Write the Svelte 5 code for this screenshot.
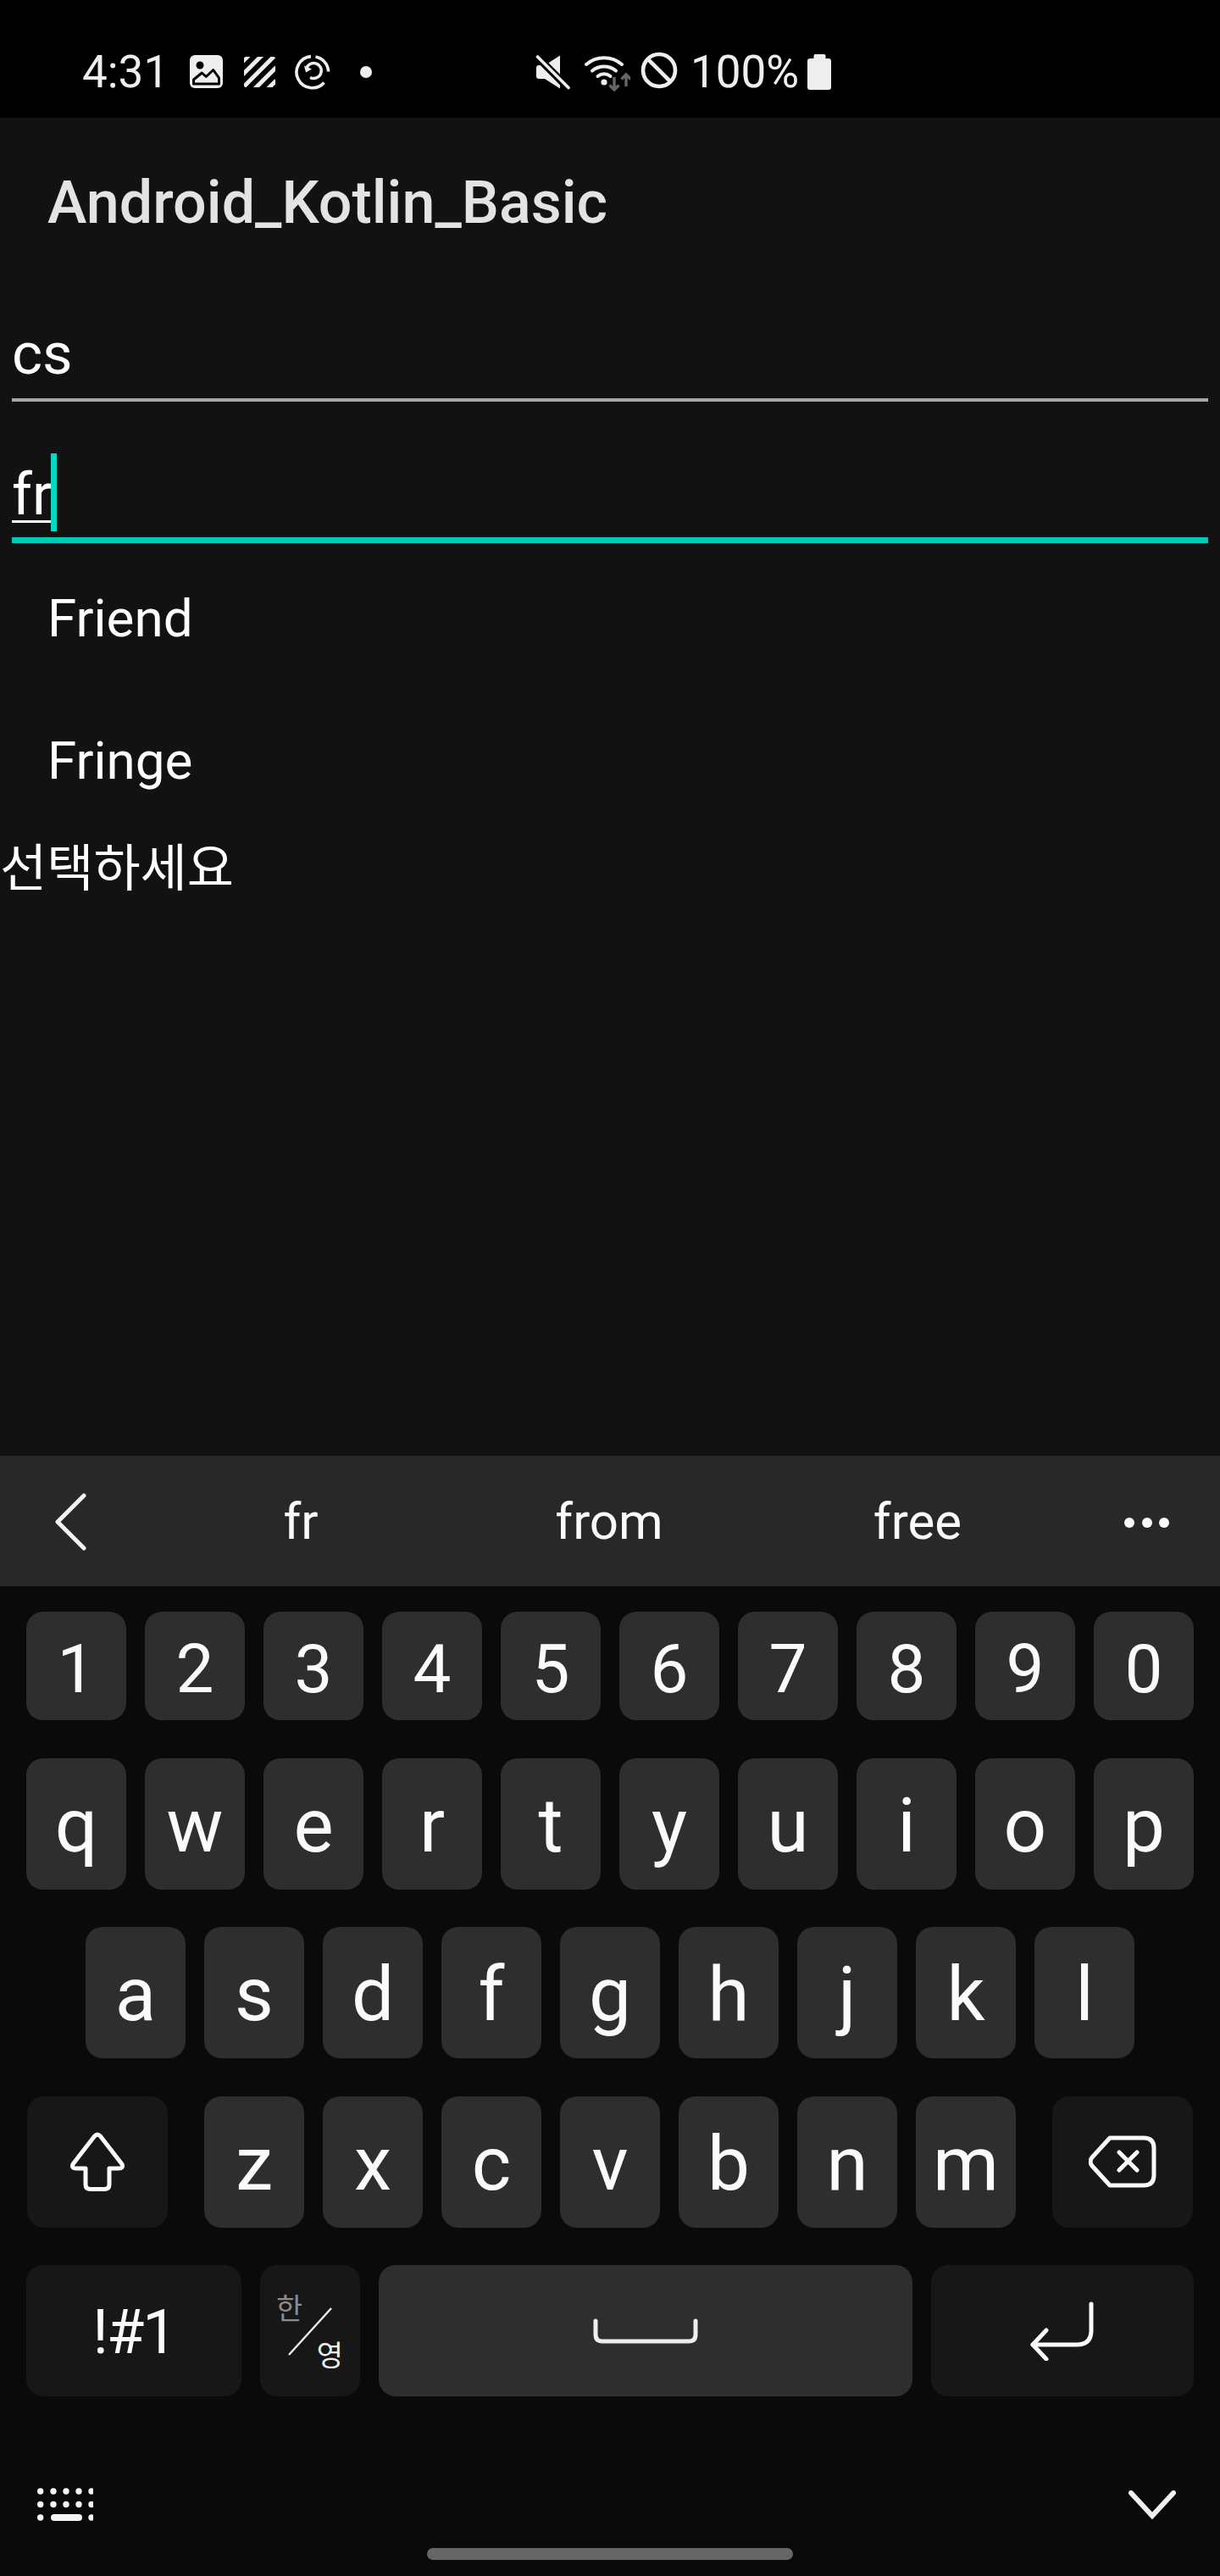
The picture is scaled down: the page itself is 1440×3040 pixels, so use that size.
<script lang="ts">
  const suggestions = ['fr', 'from', 'free'];
  const digits = '1234567890'.split('');
  const topRow = 'qwertyuiop'.split('');
  const midRow = 'asdfghjkl'.split('');
  const lowRow = 'zxcvbnm'.split('');
</script>

<div class="phone">
  <header class="status">
    <span class="clock">4:31</span>
    <svg class="ic-gallery" width="39" height="39" viewBox="0 0 39 39">
      <rect width="39" height="39" rx="6" fill="#eee" />
      <circle cx="12" cy="12" r="4.5" fill="#000" />
      <path d="M4.5 29 L14.3 21 L19.3 25.5 L27.7 17.5 L34.5 27 V34 H4.5 Z" fill="none" stroke="#000" stroke-width="3" stroke-linejoin="round" />
    </svg>
    <svg class="ic-stripes" width="37" height="36" viewBox="0 0 37 36">
      <defs><clipPath id="stripe-clip"><rect width="37" height="36" rx="2" /></clipPath></defs>
      <g clip-path="url(#stripe-clip)" stroke="#eee" stroke-width="5">
        <path d="M-2 6 L6 -2" />
        <path d="M-2 21.5 L21.5 -2" />
        <path d="M-2 37 L37 -2" />
        <path d="M12.5 38 L38 12.5" />
        <path d="M28 38 L38 28" />
      </g>
    </svg>
    <svg class="ic-sync" width="42" height="42" viewBox="0 0 42 42" fill="none" stroke="#eee" stroke-width="3.6">
      <path d="M19 2.6 A18.6 18.6 0 1 0 34.5 33.5" />
      <path d="M24.5 2.9 A18.6 18.6 0 0 1 39.6 20.5" />
      <path d="M13.4 18 A9 9 0 1 1 18 27.4" stroke-width="3.4" />
      <path d="M11 13.5 L13 21.5 L20 17.5 Z" fill="#eee" stroke="none" />
    </svg>
    <span class="dot"></span>
    <svg class="ic-mute" width="42" height="42" viewBox="0 0 42 42">
      <path d="M2 16 Q2 13 5 13 H12 L30 1.5 V40.5 L12 29 H5 Q2 29 2 26 Z" fill="#eee" />
      <path d="M3 3 L40 40" stroke="#000" stroke-width="9" />
      <path d="M3.5 3 L40 39.5" stroke="#eee" stroke-width="3.6" stroke-linecap="round" />
    </svg>
    <svg class="ic-wifi" width="54" height="44" viewBox="0 0 54 44" fill="none">
      <g stroke="#eee" stroke-width="4" stroke-linecap="round">
        <path d="M2 12 A32 32 0 0 1 44 12" />
        <path d="M9 19.5 A22 22 0 0 1 37 19.5" />
        <path d="M15.5 26 A12 12 0 0 1 30.5 26" />
      </g>
      <circle cx="23" cy="33" r="3.6" fill="#eee" />
      <g stroke="#666" stroke-width="3.4">
        <path d="M35 27 V42 M29.5 36.5 L35 42 L40.5 36.5" />
        <path d="M49 38 V24 M43.5 29.5 L49 24 L54.5 29.5" />
      </g>
    </svg>
    <svg class="ic-block" width="44" height="44" viewBox="0 0 44 44" fill="none" stroke="#eee" stroke-width="4.6">
      <circle cx="22" cy="22" r="19" />
      <path d="M8.6 8.6 L35.4 35.4" />
    </svg>
    <span class="battery-pct">100%</span>
    <svg class="ic-battery" width="28" height="42" viewBox="0 0 28 42">
      <path d="M9 0 H20 Q21.5 0 21.5 2 V5 H25 Q28 5 28 8 V39 Q28 42 25 42 H3 Q0 42 0 39 V8 Q0 5 3 5 H7.5 V2 Q7.5 0 9 0 Z" fill="#eee" />
    </svg>
  </header>

  <main class="app">
    <h1 class="app-title">Android_Kotlin_Basic</h1>

    <div class="field">
      <span class="field-text">cs</span>
    </div>
    <div class="field focused">
      <span class="field-text"><span class="composing">fr</span><span class="cursor"></span></span>
    </div>

    <ul class="options">
      <li>Friend</li>
      <li>Fringe</li>
    </ul>
    <p class="hint">선택하세요</p>
  </main>

  <section class="keyboard">
    <div class="suggest">
      <svg class="sg-back" width="44" height="70" viewBox="0 0 44 70" fill="none" stroke="#f5f5f5" stroke-width="5" stroke-linecap="round" stroke-linejoin="round">
        <path d="M35 4 L4 35 L35 66" />
      </svg>
      {#each suggestions as word}
        <span class="sg-word">{word}</span>
      {/each}
      <span class="sg-more"><i></i><i></i><i></i></span>
    </div>

    <div class="rows">
      <div class="row digits">
        {#each digits as d}
          <div class="key">{d}</div>
        {/each}
      </div>
      <div class="row tall">
        {#each topRow as k}
          <div class="key letter">{k}</div>
        {/each}
      </div>
      <div class="row tall">
        {#each midRow as k}
          <div class="key letter">{k}</div>
        {/each}
      </div>
      <div class="row tall">
        <div class="key fn shift">
          <svg width="66" height="70" viewBox="0 0 66 70" fill="none" stroke="#fafafa" stroke-width="5" stroke-linejoin="round">
            <path d="M29.5 5 Q33 1.5 36.5 5 L62 38 Q64 43 58 43 H47 V62 Q47 67.5 41 67.5 H25 Q19 67.5 19 62 V43 H8 Q2 43 4 38 Z" />
          </svg>
        </div>
        {#each lowRow as k}
          <div class="key letter">{k}</div>
        {/each}
        <div class="key fn del">
          <svg width="80" height="62" viewBox="0 0 80 62" fill="none" stroke="#fafafa" stroke-width="5" stroke-linecap="round" stroke-linejoin="round">
            <path d="M25 3 H65 Q77 3 77 15 V47 Q77 59 65 59 H25 L4 36 Q0 31 4 26 Z" />
            <path d="M36 20 L57 41 M57 20 L36 41" />
          </svg>
        </div>
      </div>
      <div class="row tall">
        <div class="key fn sym">!#1</div>
        <div class="key fn lang">
          <span class="lang-han">한</span>
          <svg class="lang-slash" width="52" height="57" viewBox="0 0 52 57" fill="none" stroke="#eee" stroke-width="2.4">
            <path d="M51 1 L1 56" />
          </svg>
          <span class="lang-eng">영</span>
        </div>
        <div class="key space">
          <svg width="124" height="30" viewBox="0 0 124 30" fill="none" stroke="#eee" stroke-width="5" stroke-linecap="round">
            <path d="M3 3 V19 Q3 27 11 27 H113 Q121 27 121 19 V3" />
          </svg>
        </div>
        <div class="key fn enter">
          <svg width="78" height="70" viewBox="0 0 78 70" fill="none" stroke="#fafafa" stroke-width="5" stroke-linecap="round" stroke-linejoin="round">
            <path d="M73 3 V34 Q73 51 56 51 H4" />
            <path d="M20 34 L4 51 L20 68" />
          </svg>
        </div>
      </div>
    </div>

    <div class="kb-tools">
      <svg width="66" height="40" viewBox="0 0 66 40" fill="#f5f5f5">
        {#each [3.7, 19, 34, 49, 64] as x}
          <circle cx={x} cy="4" r="3.7" />
          <circle cx={x} cy="19.5" r="3.7" />
        {/each}
        <circle cx="3.7" cy="35" r="3.7" />
        <rect x="16" y="31" width="37" height="8" rx="4" />
        <circle cx="64" cy="35" r="3.7" />
      </svg>
      <svg width="56" height="34" viewBox="0 0 56 34" fill="none" stroke="#f0f0f0" stroke-width="6" stroke-linecap="round">
        <path d="M3 3 L28 30 L53 3" />
      </svg>
    </div>
    <div class="gesture-wrap"><span class="gesture-bar"></span></div>
  </section>
</div>

<style>
  :global(body) {
    margin: 0;
    background: #121212;
  }

  .phone {
    width: 1440px;
    height: 3040px;
    display: flex;
    flex-direction: column;
    font-family: Roboto, 'Noto Sans CJK KR', sans-serif;
    overflow: hidden;
  }

  /* status bar */
  .status {
    height: 139px;
    background: #000;
    color: #eee;
    display: flex;
    align-items: center;
    padding-left: 97px;
    padding-top: 30px;
    box-sizing: border-box;
    font-size: 53px;
    flex: none;
  }

  .clock {
    width: 127px;
  }

  .status svg {
    flex: none;
  }

  .ic-stripes {
    margin-left: 25px;
  }

  .ic-sync {
    margin-left: 23px;
  }

  .dot {
    width: 14px;
    height: 14px;
    border-radius: 50%;
    background: #eee;
    margin-left: 35px;
  }

  .ic-mute {
    margin-left: 192px;
  }

  .ic-wifi {
    margin-left: 17px;
    margin-top: 2px;
  }

  .ic-block {
    margin-left: 12px;
    margin-top: -4px;
  }

  .battery-pct {
    margin-left: 15px;
    width: 138px;
  }

  /* app content */
  .app {
    flex: 1;
    background: #121212;
    color: #fff;
    min-height: 0;
  }

  .app-title {
    margin: 0;
    height: 200px;
    padding: 0 0 0 56px;
    font-size: 70px;
    font-weight: 500;
    line-height: 200px;
    color: #e3e3e3;
    letter-spacing: 0;
  }

  .field {
    margin: 0 14px;
    height: 87px;
    padding-top: 44px;
    border-bottom: 4px solid #a8a8a8;
    font-size: 69px;
    line-height: 70px;
  }

  .field.focused {
    height: 85px;
    padding-top: 75px;
    border-bottom: 7px solid #00c9b6;
  }

  .field-text {
    display: inline-flex;
    align-items: flex-start;
  }

  .composing {
    height: 65px;
    border-bottom: 3px solid #fff;
  }

  .cursor {
    width: 7px;
    height: 92px;
    background: #00d8c3;
    margin-left: -1px;
    margin-top: -14px;
  }

  .options {
    list-style: none;
    margin: 0;
    padding: 5px 0 0;
  }

  .options li {
    height: 168px;
    line-height: 168px;
    padding-left: 56px;
    font-size: 62px;
  }

  .hint {
    margin: 3px 0 0;
    font-family: 'Noto Sans CJK KR', sans-serif;
    font-size: 60px;
    line-height: 70px;
    color: #fff;
  }

  /* keyboard */
  .keyboard {
    height: 1322px;
    flex: none;
    background: #0a0a0a;
    color: #fafafa;
    display: flex;
    flex-direction: column;
  }

  .suggest {
    height: 154px;
    background: #282828;
    display: flex;
    align-items: center;
    position: relative;
    flex: none;
  }

  .sg-back {
    position: absolute;
    left: 64px;
    top: 43px;
  }

  .sg-word {
    position: absolute;
    top: 0;
    height: 154px;
    line-height: 156px;
    font-size: 60px;
    width: 300px;
    text-align: center;
  }

  .sg-word:nth-of-type(1) { left: 205px; }
  .sg-word:nth-of-type(2) { left: 569px; }
  .sg-word:nth-of-type(3) { left: 933px; }

  .sg-more {
    position: absolute;
    left: 1327px;
    top: 73px;
    display: flex;
    gap: 8.5px;
  }

  .sg-more i {
    width: 12px;
    height: 12px;
    border-radius: 50%;
    background: #fafafa;
  }

  .rows {
    display: flex;
    flex-direction: column;
    gap: 44.5px;
    padding: 30px 31px 0;
    height: 956px;
    box-sizing: border-box;
    flex: none;
  }

  .row {
    display: flex;
    justify-content: center;
    gap: 22px;
    height: 155px;
    flex: none;
  }

  .row.digits {
    height: 128px;
  }

  .key {
    width: 118px;
    flex: none;
    background: #2e2e2e;
    border-radius: 20px;
    display: flex;
    align-items: center;
    justify-content: center;
    box-sizing: border-box;
    font-size: 80px;
    line-height: 1;
    padding-top: 8px;
    position: relative;
  }

  .key.letter {
    font-size: 89px;
    padding-top: 4px;
  }

  .key.fn {
    background: #171717;
    padding-top: 0;
  }

  .key.shift,
  .key.del {
    width: 166px;
  }

  .key.shift {
    margin-right: 21px;
  }

  .key.del {
    margin-left: 21px;
  }

  .key.sym {
    width: 254px;
    font-size: 72px;
    letter-spacing: -2px;
    padding-top: 4px;
  }

  .key.lang {
    width: 118px;
  }

  .key.space {
    width: 630px;
    padding-top: 0;
  }

  .key.enter {
    width: 310px;
  }

  .lang-han,
  .lang-eng {
    position: absolute;
    font-family: 'Noto Sans CJK KR', sans-serif;
    font-size: 34px;
    line-height: 34px;
  }

  .lang-han {
    left: 19px;
    top: 33px;
    color: #8c8c8c;
  }

  .lang-eng {
    right: 20px;
    bottom: 33px;
    color: #eee;
  }

  .lang-slash {
    position: absolute;
    left: 33px;
    top: 50px;
  }

  .kb-tools {
    display: flex;
    justify-content: space-between;
    align-items: center;
    padding: 0 52px 0 44px;
    height: 40px;
    margin-top: 108px;
    flex: none;
  }

  .gesture-wrap {
    display: flex;
    justify-content: center;
    margin-top: 31px;
  }

  .gesture-bar {
    width: 432px;
    height: 14px;
    border-radius: 7px;
    background: #666;
  }
</style>
